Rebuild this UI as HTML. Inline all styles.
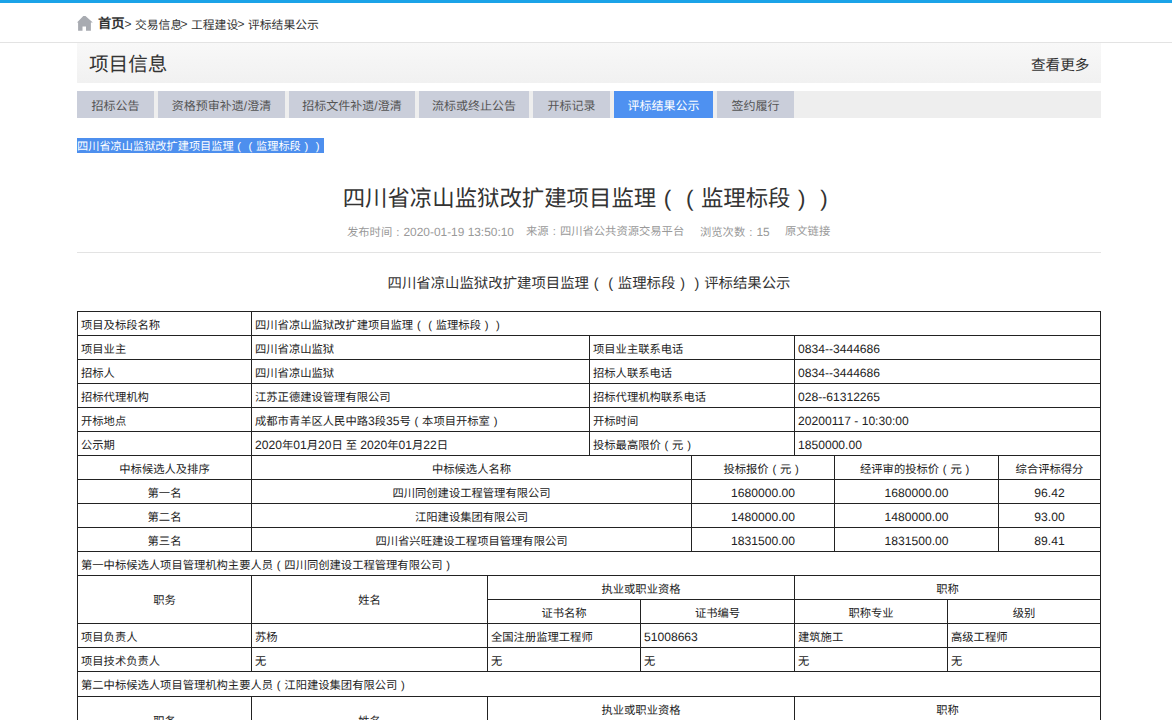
<!DOCTYPE html>
<html lang="zh-CN">
<head>
<meta charset="utf-8">
<style>
*{margin:0;padding:0;box-sizing:border-box}
html,body{width:1172px;height:720px;overflow:hidden;background:#fff}
body{position:relative;font-family:"Liberation Sans",sans-serif;color:#333;font-size:11.3px;text-spacing-trim:space-all;text-rendering:geometricPrecision}
.a{position:absolute;white-space:nowrap}
b{font-weight:normal}
.n{font-size:12.1px}
.nm{font-size:11.9px}
.p{display:inline-block;width:1em;text-align:center;font-style:normal}
#topbar{left:0;top:0;width:1172px;height:3px;background:#1ba3e8}
#crumbline{left:0;top:42px;width:1172px;height:1px;background:#e3e3e3}
#panel{left:77px;top:43px;width:1024px;height:40px;background:linear-gradient(#f8f8f8,#f1f1f1)}
#tabbar{left:77px;top:91px;width:1024px;height:27px;background:#eeeeee}
.tab{position:absolute;top:0;height:27px;line-height:27px;padding-top:2px;text-align:center;background:#cacedA;color:#555;font-size:12px}
.tab.on{background:#4e91f1;color:#fff}
#sel{left:77px;top:138px;width:247px;height:15px;background:#4d8fee;color:#fff;line-height:15px;padding-top:2px;font-size:11.2px}
#title{left:77px;top:182px;width:1024px;text-align:center;font-size:22.4px;line-height:34px;color:#333}
#hline{left:77px;top:252px;width:1024px;height:1px;background:#e3e3e3}
#sub{left:77px;top:274px;width:1024px;text-align:center;font-size:14.4px;line-height:20px;color:#333}
.c{position:absolute;border:1px solid #222;display:flex;align-items:center;padding-left:3px;padding-top:2px;font-size:11.3px;color:#222;white-space:nowrap;overflow:hidden}
.c.m{justify-content:center;padding-left:0}
</style>
</head>
<body>
<div class="a" id="topbar"></div>
<div class="a" id="crumbline"></div>
<div class="a" id="panel"></div>
<div class="a" style="left:89px;top:53px;font-size:19.6px;line-height:24px;color:#333">项目信息</div>
<div class="a" style="left:1031px;top:57px;font-size:14.6px;line-height:18px;color:#333">查看更多</div>
<div class="a" id="tabbar">
 <div class="tab" style="left:0;width:77px">招标公告</div>
 <div class="tab" style="left:81px;width:127px">资格预审补遗/澄清</div>
 <div class="tab" style="left:212px;width:126px">招标文件补遗/澄清</div>
 <div class="tab" style="left:342px;width:110px">流标或终止公告</div>
 <div class="tab" style="left:456px;width:77px">开标记录</div>
 <div class="tab on" style="left:537px;width:99px">评标结果公示</div>
 <div class="tab" style="left:640px;width:77px">签约履行</div>
</div>
<svg class="a" style="left:77px;top:16px" width="16" height="15" viewBox="0 0 16 15"><path d="M6.3 0H8.5L15.8 6.6H13.9V14.7H9.0V10.6H5.5V14.7H1.1V6.6H0Z" fill="#a8abb1"/></svg>
<div class="a" style="left:98px;top:15px;font-size:13.3px;line-height:17px;color:#333;font-weight:bold">首页</div>
<div class="a" style="left:124.5px;top:16px;font-size:12px;line-height:16px;color:#333;">&gt;</div>
<div class="a" style="left:135px;top:16.5px;font-size:11.8px;line-height:16px;color:#333;">交易信息</div>
<div class="a" style="left:180.5px;top:16px;font-size:12px;line-height:16px;color:#333;">&gt;</div>
<div class="a" style="left:191px;top:16.5px;font-size:11.8px;line-height:16px;color:#333;">工程建设</div>
<div class="a" style="left:237.5px;top:16px;font-size:12px;line-height:16px;color:#333;">&gt;</div>
<div class="a" style="left:248px;top:16.5px;font-size:11.8px;line-height:16px;color:#333;">评标结果公示</div>
<div class="a" style="left:347px;top:223.5px;font-size:11.3px;line-height:17px;color:#999;">发布时间<i class="p">:</i><b class="nm">2020-01-19 13:50:10</b></div>
<div class="a" style="left:526px;top:223.5px;font-size:11.3px;line-height:17px;color:#999;">来源<i class="p">:</i>四川省公共资源交易平台</div>
<div class="a" style="left:700px;top:223.5px;font-size:11.3px;line-height:17px;color:#999;">浏览次数<i class="p">:</i><b class="nm">15</b></div>
<div class="a" style="left:785px;top:223.5px;font-size:11.3px;line-height:17px;color:#999;">原文链接</div>
<div class="a" id="sel">四川省凉山监狱改扩建项目监理<i class="p">(</i><i class="p">(</i>监理标段<i class="p">)</i><i class="p">)</i></div>
<div class="a" id="title">四川省凉山监狱改扩建项目监理<i class="p">(</i><i class="p">(</i>监理标段<i class="p">)</i><i class="p">)</i></div>
<div class="a" id="hline"></div>
<div class="a" id="sub">四川省凉山监狱改扩建项目监理<i class="p">(</i><i class="p">(</i>监理标段<i class="p">)</i><i class="p">)</i>评标结果公示</div>
<div class="c" style="left:77px;top:311px;width:175px;height:25px"><span>项目及标段名称</span></div>
<div class="c" style="left:251px;top:311px;width:850px;height:25px"><span>四川省凉山监狱改扩建项目监理<i class="p">(</i><i class="p">(</i>监理标段<i class="p">)</i><i class="p">)</i></span></div>
<div class="c" style="left:77px;top:335px;width:175px;height:25px"><span>项目业主</span></div>
<div class="c" style="left:251px;top:335px;width:339px;height:25px"><span>四川省凉山监狱</span></div>
<div class="c" style="left:589px;top:335px;width:206px;height:25px"><span>项目业主联系电话</span></div>
<div class="c" style="left:794px;top:335px;width:307px;height:25px"><span><b class="n">0834--3444686</b></span></div>
<div class="c" style="left:77px;top:359px;width:175px;height:25px"><span>招标人</span></div>
<div class="c" style="left:251px;top:359px;width:339px;height:25px"><span>四川省凉山监狱</span></div>
<div class="c" style="left:589px;top:359px;width:206px;height:25px"><span>招标人联系电话</span></div>
<div class="c" style="left:794px;top:359px;width:307px;height:25px"><span><b class="n">0834--3444686</b></span></div>
<div class="c" style="left:77px;top:383px;width:175px;height:25px"><span>招标代理机构</span></div>
<div class="c" style="left:251px;top:383px;width:339px;height:25px"><span>江苏正德建设管理有限公司</span></div>
<div class="c" style="left:589px;top:383px;width:206px;height:25px"><span>招标代理机构联系电话</span></div>
<div class="c" style="left:794px;top:383px;width:307px;height:25px"><span><b class="n">028--61312265</b></span></div>
<div class="c" style="left:77px;top:407px;width:175px;height:25px"><span>开标地点</span></div>
<div class="c" style="left:251px;top:407px;width:339px;height:25px"><span>成都市青羊区人民中路<b class="n">3</b>段<b class="n">35</b>号<i class="p">(</i>本项目开标室<i class="p">)</i></span></div>
<div class="c" style="left:589px;top:407px;width:206px;height:25px"><span>开标时间</span></div>
<div class="c" style="left:794px;top:407px;width:307px;height:25px"><span><b class="n">20200117 - 10:30:00</b></span></div>
<div class="c" style="left:77px;top:431px;width:175px;height:25px"><span>公示期</span></div>
<div class="c" style="left:251px;top:431px;width:339px;height:25px"><span><b class="n">2020</b>年<b class="n">01</b>月<b class="n">20</b>日 至 <b class="n">2020</b>年<b class="n">01</b>月<b class="n">22</b>日</span></div>
<div class="c" style="left:589px;top:431px;width:206px;height:25px"><span>投标最高限价<i class="p">(</i>元<i class="p">)</i></span></div>
<div class="c" style="left:794px;top:431px;width:307px;height:25px"><span><b class="n">1850000.00</b></span></div>
<div class="c m" style="left:77px;top:455px;width:175px;height:25px"><span>中标候选人及排序</span></div>
<div class="c m" style="left:251px;top:455px;width:441px;height:25px"><span>中标候选人名称</span></div>
<div class="c m" style="left:691px;top:455px;width:144px;height:25px"><span>投标报价<i class="p">(</i>元<i class="p">)</i></span></div>
<div class="c m" style="left:834px;top:455px;width:165px;height:25px"><span>经评审的投标价<i class="p">(</i>元<i class="p">)</i></span></div>
<div class="c m" style="left:998px;top:455px;width:103px;height:25px"><span>综合评标得分</span></div>
<div class="c m" style="left:77px;top:479px;width:175px;height:25px"><span>第一名</span></div>
<div class="c m" style="left:251px;top:479px;width:441px;height:25px"><span>四川同创建设工程管理有限公司</span></div>
<div class="c m" style="left:691px;top:479px;width:144px;height:25px"><span><b class="n">1680000.00</b></span></div>
<div class="c m" style="left:834px;top:479px;width:165px;height:25px"><span><b class="n">1680000.00</b></span></div>
<div class="c m" style="left:998px;top:479px;width:103px;height:25px"><span><b class="n">96.42</b></span></div>
<div class="c m" style="left:77px;top:503px;width:175px;height:25px"><span>第二名</span></div>
<div class="c m" style="left:251px;top:503px;width:441px;height:25px"><span>江阳建设集团有限公司</span></div>
<div class="c m" style="left:691px;top:503px;width:144px;height:25px"><span><b class="n">1480000.00</b></span></div>
<div class="c m" style="left:834px;top:503px;width:165px;height:25px"><span><b class="n">1480000.00</b></span></div>
<div class="c m" style="left:998px;top:503px;width:103px;height:25px"><span><b class="n">93.00</b></span></div>
<div class="c m" style="left:77px;top:527px;width:175px;height:25px"><span>第三名</span></div>
<div class="c m" style="left:251px;top:527px;width:441px;height:25px"><span>四川省兴旺建设工程项目管理有限公司</span></div>
<div class="c m" style="left:691px;top:527px;width:144px;height:25px"><span><b class="n">1831500.00</b></span></div>
<div class="c m" style="left:834px;top:527px;width:165px;height:25px"><span><b class="n">1831500.00</b></span></div>
<div class="c m" style="left:998px;top:527px;width:103px;height:25px"><span><b class="n">89.41</b></span></div>
<div class="c" style="left:77px;top:551px;width:1024px;height:25px"><span>第一中标候选人项目管理机构主要人员<i class="p">(</i>四川同创建设工程管理有限公司<i class="p">)</i></span></div>
<div class="c m" style="left:77px;top:575px;width:175px;height:49px;padding-top:0"><span>职务</span></div>
<div class="c m" style="left:251px;top:575px;width:237px;height:49px;padding-top:0"><span>姓名</span></div>
<div class="c m" style="left:487px;top:575px;width:308px;height:25px"><span>执业或职业资格</span></div>
<div class="c m" style="left:794px;top:575px;width:307px;height:25px"><span>职称</span></div>
<div class="c m" style="left:487px;top:599px;width:154px;height:25px"><span>证书名称</span></div>
<div class="c m" style="left:640px;top:599px;width:155px;height:25px"><span>证书编号</span></div>
<div class="c m" style="left:794px;top:599px;width:154px;height:25px"><span>职称专业</span></div>
<div class="c m" style="left:947px;top:599px;width:154px;height:25px"><span>级别</span></div>
<div class="c" style="left:77px;top:623px;width:175px;height:25px"><span>项目负责人</span></div>
<div class="c" style="left:251px;top:623px;width:237px;height:25px"><span>苏杨</span></div>
<div class="c" style="left:487px;top:623px;width:154px;height:25px"><span>全国注册监理工程师</span></div>
<div class="c" style="left:640px;top:623px;width:155px;height:25px"><span><b class="n">51008663</b></span></div>
<div class="c" style="left:794px;top:623px;width:154px;height:25px"><span>建筑施工</span></div>
<div class="c" style="left:947px;top:623px;width:154px;height:25px"><span>高级工程师</span></div>
<div class="c" style="left:77px;top:647px;width:175px;height:25px"><span>项目技术负责人</span></div>
<div class="c" style="left:251px;top:647px;width:237px;height:25px"><span>无</span></div>
<div class="c" style="left:487px;top:647px;width:154px;height:25px"><span>无</span></div>
<div class="c" style="left:640px;top:647px;width:155px;height:25px"><span>无</span></div>
<div class="c" style="left:794px;top:647px;width:154px;height:25px"><span>无</span></div>
<div class="c" style="left:947px;top:647px;width:154px;height:25px"><span>无</span></div>
<div class="c" style="left:77px;top:671px;width:1024px;height:26px"><span>第二中标候选人项目管理机构主要人员<i class="p">(</i>江阳建设集团有限公司<i class="p">)</i></span></div>
<div class="c m" style="left:77px;top:696px;width:175px;height:49px;padding-top:0"><span>职务</span></div>
<div class="c m" style="left:251px;top:696px;width:237px;height:49px;padding-top:0"><span>姓名</span></div>
<div class="c m" style="left:487px;top:696px;width:308px;height:25px"><span>执业或职业资格</span></div>
<div class="c m" style="left:794px;top:696px;width:307px;height:25px"><span>职称</span></div>
<div class="c m" style="left:487px;top:720px;width:154px;height:25px"><span>证书名称</span></div>
<div class="c m" style="left:640px;top:720px;width:155px;height:25px"><span>证书编号</span></div>
<div class="c m" style="left:794px;top:720px;width:154px;height:25px"><span>职称专业</span></div>
<div class="c m" style="left:947px;top:720px;width:154px;height:25px"><span>级别</span></div>
</body>
</html>
